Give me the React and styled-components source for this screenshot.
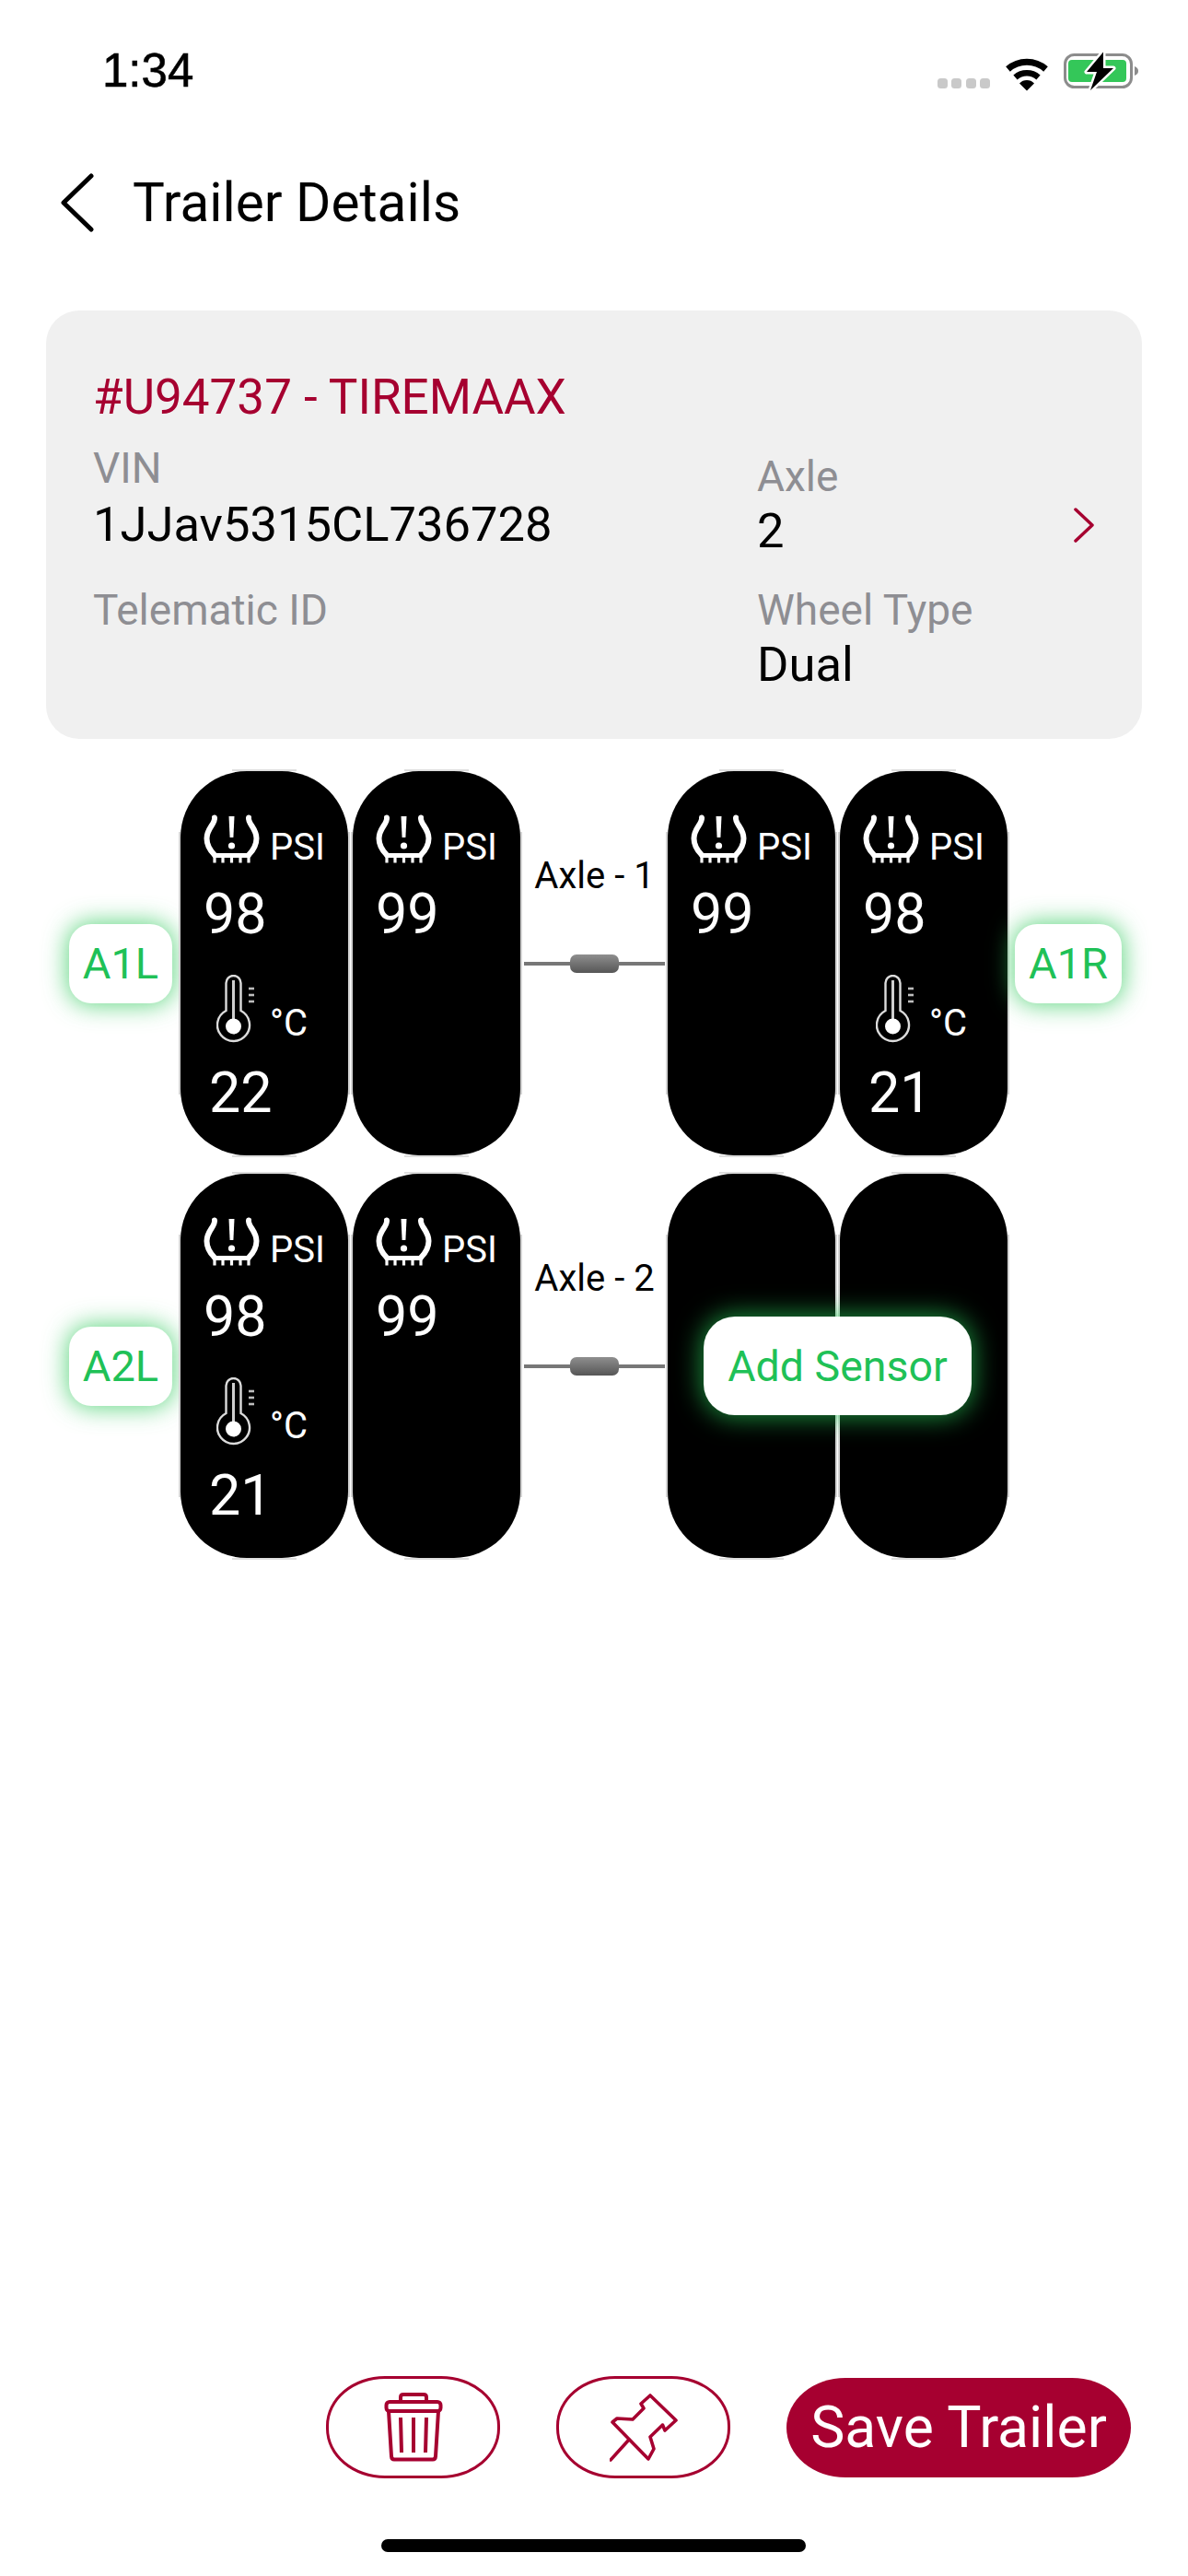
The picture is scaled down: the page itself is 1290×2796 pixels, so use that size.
import React from "react";
import styled, { createGlobalStyle } from "styled-components";

const crimson = "#a60030";
const green = "#1fc157";

const axles = [
  {
    id: 1,
    left: "A1L",
    right: "A1R",
    tires: [
      { psi: 98, temp: 22 },
      { psi: 99 },
      { psi: 99 },
      { psi: 98, temp: 21 },
    ],
  },
  {
    id: 2,
    left: "A2L",
    addSensor: true,
    tires: [{ psi: 98, temp: 21 }, { psi: 99 }, {}, {}],
  },
];

function App() {
  return (
    <Page>
      <GlobalStyle />
      <StatusBar>
        <Clock>1:34</Clock>
        <StatusIcons>
          <SignalDots>
            <i />
            <i />
            <i />
            <i />
          </SignalDots>
          <WifiIcon />
          <BatteryIcon />
        </StatusIcons>
      </StatusBar>

      <Header>
        <svg width="36" height="64" viewBox="0 0 36 64" fill="none">
          <path d="M33 3 L3 32 L33 61" stroke="#000" strokeWidth="5" strokeLinecap="round" strokeLinejoin="round" />
        </svg>
        <Title>Trailer Details</Title>
      </Header>

      <Card>
        <CardTitle>#U94737 - TIREMAAX</CardTitle>
        <CardGrid>
          <Column>
            <Label $top={21}>VIN</Label>
            <Value $top={5}>1JJav5315CL736728</Value>
            <Label $top={37}>Telematic ID</Label>
          </Column>
          <Column>
            <Label $top={30}>Axle</Label>
            <Value $top={3}>2</Value>
            <Label $top={30}>Wheel Type</Label>
            <Value $top={3}>Dual</Value>
          </Column>
          <CardChevron>
            <svg width="24" height="38" viewBox="0 0 24 38" fill="none">
              <path d="M3 2 L21 19 L3 36" stroke={crimson} strokeWidth="3.5" strokeLinecap="round" strokeLinejoin="round" />
            </svg>
          </CardChevron>
        </CardGrid>
      </Card>

      <AxleList>
        {axles.map((axle) => (
          <AxleRow key={axle.id} axle={axle} />
        ))}
      </AxleList>

      <Footer>
        <OutlineButton>
          <TrashIcon />
        </OutlineButton>
        <OutlineButton>
          <PinIcon />
        </OutlineButton>
        <SaveButton>Save Trailer</SaveButton>
      </Footer>
      <HomeIndicator />
    </Page>
  );
}

function AxleRow({ axle }) {
  const [a, b, c, d] = axle.tires;
  return (
    <Row>
      <Badge $width={112}>{axle.left}</Badge>
      <TirePair>
        <Tire data={a} />
        <Tire data={b} />
      </TirePair>
      <AxleColumn>
        <AxleLabel>Axle - {axle.id}</AxleLabel>
        <Shaft>
          <Rod />
          <Hub />
          <Rod />
        </Shaft>
      </AxleColumn>
      <TirePair>
        <Tire data={c} />
        <Tire data={d} />
        {axle.addSensor && <AddSensor>Add Sensor</AddSensor>}
      </TirePair>
      {axle.right && <Badge $width={116} $gap={8}>{axle.right}</Badge>}
    </Row>
  );
}

function Tire({ data }) {
  return (
    <TireBody>
      {data.psi && (
        <>
          <PsiRow>
            <TpmsIcon />
            <Unit $drop={5}>PSI</Unit>
          </PsiRow>
          <Reading $top={20}>{data.psi}</Reading>
        </>
      )}
      {data.temp && (
        <>
          <TempRow>
            <ThermometerIcon />
            <Unit $drop={0}>°C</Unit>
          </TempRow>
          <Reading $top={18} $left={6}>{data.temp}</Reading>
        </>
      )}
    </TireBody>
  );
}

function WifiIcon() {
  return (
    <svg width="48" height="38" viewBox="0 0 48 38" fill="none">
      <path d="M3.5 14 A31 31 0 0 1 44.5 14" stroke="#000" strokeWidth="7" />
      <path d="M11.5 23 A19 19 0 0 1 36.5 23" stroke="#000" strokeWidth="6.5" />
      <path d="M24 37.5 L16 29.5 A11 11 0 0 1 32 29.5 Z" fill="#000" />
    </svg>
  );
}

function BatteryIcon() {
  return (
    <svg width="82" height="44" viewBox="0 0 82 44" fill="none">
      <rect x="1.5" y="4.5" width="72" height="35" rx="10" stroke="#8c8c8c" strokeWidth="3" />
      <rect x="5" y="10" width="63" height="24" rx="4" fill="#34c759" />
      <path d="M77 17 C80 18 81 20 81 22 C81 24 80 26 77 27 Z" fill="#8c8c8c" />
      <path d="M43 1.5 L25 23 L36 23 L29 43 L54 19 L43 19 Z" fill="#000" stroke="#fff" strokeWidth="5" strokeLinejoin="round" paintOrder="stroke" />
    </svg>
  );
}

function TpmsIcon() {
  return (
    <svg width="61" height="53" viewBox="0 0 61 53" fill="none">
      <g stroke="#fff" strokeLinecap="round">
        <path d="M12 3.5 C13 10 3.5 15 3.5 26 C3.5 33 7 39 12 44" strokeWidth="6" />
        <path d="M49 3.5 C48 10 57.5 15 57.5 26 C57.5 33 54 39 49 44" strokeWidth="6" />
        <path d="M12 44.5 H49" strokeWidth="5" />
      </g>
      <path d="M27.5 2 H33.5 L32.4 25 H28.6 Z" fill="#fff" />
      <circle cx="30.5" cy="34" r="3.6" fill="#fff" />
      <g stroke="#fff" strokeWidth="3.2">
        <path d="M12 45 V52.5" />
        <path d="M21 45 V52.5" />
        <path d="M30.5 45 V52.5" />
        <path d="M40 45 V52.5" />
        <path d="M49 45 V52.5" />
      </g>
    </svg>
  );
}

function ThermometerIcon() {
  return (
    <svg width="42" height="75" viewBox="0 0 42 75" fill="none">
      <path
        d="M10.5 39 V9 A8 8 0 0 1 26.5 9 V39 A17.5 17.5 0 1 1 10.5 39 Z"
        stroke="#dcdcdc"
        strokeWidth="2.4"
      />
      <path d="M18.5 6 V48" stroke="#cfcfcf" strokeWidth="3" />
      <circle cx="18.5" cy="56" r="8.5" fill="#fff" />
      <g stroke="#bdbdbd" strokeWidth="2.6">
        <path d="M35 15 H41" />
        <path d="M35 22 H41" />
        <path d="M35 29 H41" />
      </g>
    </svg>
  );
}

function TrashIcon() {
  return (
    <svg width="64" height="75" viewBox="0 0 64 75" fill="none" stroke={crimson} strokeWidth="4" strokeLinejoin="round">
      <path d="M18 9 V5 Q18 2 21 2 H43 Q46 2 46 5 V9" />
      <rect x="2.5" y="10" width="59" height="10" rx="3.5" />
      <path d="M5 20 L8 69 Q8.3 72.5 11 72.5 H53 Q55.7 72.5 56 69 L59 20" />
      <path d="M18 27 L19 65 M32 27 V65 M46 27 L45 65" />
    </svg>
  );
}

function PinIcon() {
  return (
    <svg width="74" height="74" viewBox="0 0 74 74" fill="none" stroke={crimson} strokeWidth="3.6" strokeLinejoin="round" strokeLinecap="round">
      <path d="M44 2 L72 29 L60 40 L57.5 34 L44 47 L48 60 L42 71 L3 31 L8 27 L25 28 L37 16 L34 11 Z" />
      <path d="M21 50 L1 72" />
    </svg>
  );
}

const GlobalStyle = createGlobalStyle`
  body {
    margin: 0;
    background: #fff;
    font-family: Roboto, "Liberation Sans", sans-serif;
  }
`;

const Page = styled.div`
  width: 1290px;
  height: 2796px;
  display: flex;
  flex-direction: column;
  overflow: hidden;
  background: #fff;
`;

const StatusBar = styled.div`
  height: 120px;
  padding: 34px 53px 0 111px;
  box-sizing: border-box;
  display: flex;
  justify-content: space-between;
  align-items: center;
`;

const Clock = styled.span`
  font-family: "Liberation Sans", sans-serif;
  font-size: 51px;
  line-height: 60px;
  color: #000;
  -webkit-text-stroke: 0.6px #000;
`;

const StatusIcons = styled.div`
  display: flex;
  align-items: flex-end;
  gap: 16px;
`;

const SignalDots = styled.div`
  display: flex;
  gap: 4.5px;
  margin-bottom: 3px;

  i {
    width: 11px;
    height: 11px;
    border-radius: 3.5px;
    background: #c9c9c9;
  }
`;

const Header = styled.div`
  margin-top: 40px;
  height: 120px;
  padding-left: 66px;
  display: flex;
  align-items: center;
  gap: 42px;
`;

const Title = styled.h1`
  margin: 0;
  font-size: 58.5px;
  font-weight: 400;
  line-height: 66px;
  color: #000;
`;

const Card = styled.section`
  margin: 57px 50px 0;
  height: 465px;
  padding: 64px 0 0 51px;
  box-sizing: border-box;
  border-radius: 36px;
  background: #f0f0f0;
`;

const CardTitle = styled.h2`
  margin: 0;
  font-size: 53px;
  font-weight: 400;
  line-height: 60px;
  color: ${crimson};
`;

const CardGrid = styled.div`
  display: grid;
  grid-template-columns: 721px 343px 1fr;
`;

const Column = styled.div`
  display: flex;
  flex-direction: column;
`;

const Label = styled.span`
  margin-top: ${(p) => p.$top}px;
  font-size: 46px;
  line-height: 52px;
  color: #8e8e93;
`;

const Value = styled.span`
  margin-top: ${(p) => p.$top}px;
  font-size: 52.5px;
  line-height: 60px;
  color: #000;
`;

const CardChevron = styled.div`
  margin-top: 90px;
`;

const AxleList = styled.div`
  margin-top: 35px;
  padding-left: 75px;
  display: flex;
  flex-direction: column;
  gap: 20px;
`;

const Row = styled.div`
  height: 417px;
  display: flex;
  align-items: center;
`;

const Badge = styled.div`
  position: relative;
  width: ${(p) => p.$width}px;
  height: 86px;
  margin-left: ${(p) => p.$gap || 0}px;
  margin-right: 9px;
  border-radius: 24px;
  background: #fff;
  box-shadow: 0 0 26px 2px rgba(45, 200, 90, 0.75);
  display: flex;
  align-items: center;
  justify-content: center;
  font-size: 47px;
  color: ${green};
`;

const TirePair = styled.div`
  position: relative;
  display: flex;
  gap: 5px;
`;

const TireBody = styled.div`
  position: relative;
  width: 182px;
  height: 417px;
  padding: 47px 0 0 25px;
  box-sizing: border-box;
  border-radius: 72px;
  background: #000;
  color: #fff;

  &::before,
  &::after {
    content: "";
    position: absolute;
  }

  &::before {
    inset: 66px -2px;
    border-inline: 2px solid #d4d4d4;
  }

  &::after {
    inset: -2px 56px;
    border-block: 2px solid #dedede;
  }
`;

const PsiRow = styled.div`
  height: 53px;
  display: flex;
  align-items: flex-end;
  gap: 11px;
`;

const Unit = styled.span`
  font-size: 40px;
  line-height: 44px;
  margin-bottom: ${(p) => -p.$drop}px;
`;

const Reading = styled.div`
  margin-top: ${(p) => p.$top}px;
  margin-left: ${(p) => p.$left || 0}px;
  font-size: 61px;
  line-height: 70px;
`;

const TempRow = styled.div`
  height: 75px;
  margin-top: 31px;
  margin-left: 14px;
  display: flex;
  align-items: flex-end;
  gap: 16px;
`;

const AxleColumn = styled.div`
  width: 160px;
  height: 100%;
  box-sizing: border-box;
  padding: 92px 3px 0 4px;
  display: flex;
  flex-direction: column;
  align-items: center;
`;

const AxleLabel = styled.span`
  font-size: 40px;
  line-height: 44px;
  color: #000;
`;

const Shaft = styled.div`
  width: 100%;
  margin-top: 63px;
  height: 20px;
  display: flex;
  align-items: center;
`;

const Rod = styled.div`
  flex: 1;
  height: 4px;
  background: #777;
`;

const Hub = styled.div`
  width: 53px;
  height: 20px;
  border-radius: 7px;
  background: linear-gradient(#8f8f8f, #565656);
`;

const AddSensor = styled.button`
  position: absolute;
  left: 39px;
  top: 155px;
  width: 291px;
  height: 107px;
  padding: 0;
  border: none;
  border-radius: 34px;
  background: #fff;
  box-shadow: 0 0 28px 2px rgba(40, 210, 90, 0.7);
  font: 400 46.5px Roboto, sans-serif;
  color: ${green};
`;

const Footer = styled.div`
  margin-top: auto;
  padding-right: 62px;
  display: flex;
  justify-content: flex-end;
  align-items: center;
  gap: 61px;
`;

const OutlineButton = styled.button`
  width: 189px;
  height: 111px;
  padding: 0;
  box-sizing: border-box;
  border: 3px solid ${crimson};
  border-radius: 64px / 54px;
  background: #fff;
  display: flex;
  align-items: center;
  justify-content: center;
`;

const SaveButton = styled.button`
  width: 374px;
  height: 108px;
  padding: 0;
  border: none;
  border-radius: 64px / 54px;
  background: ${crimson};
  font: 400 62.5px Roboto, sans-serif;
  color: #fff;
`;

const HomeIndicator = styled.div`
  width: 461px;
  height: 14px;
  margin: 66px 0 26px 414px;
  border-radius: 7px;
  background: #000;
`;

export default App;
